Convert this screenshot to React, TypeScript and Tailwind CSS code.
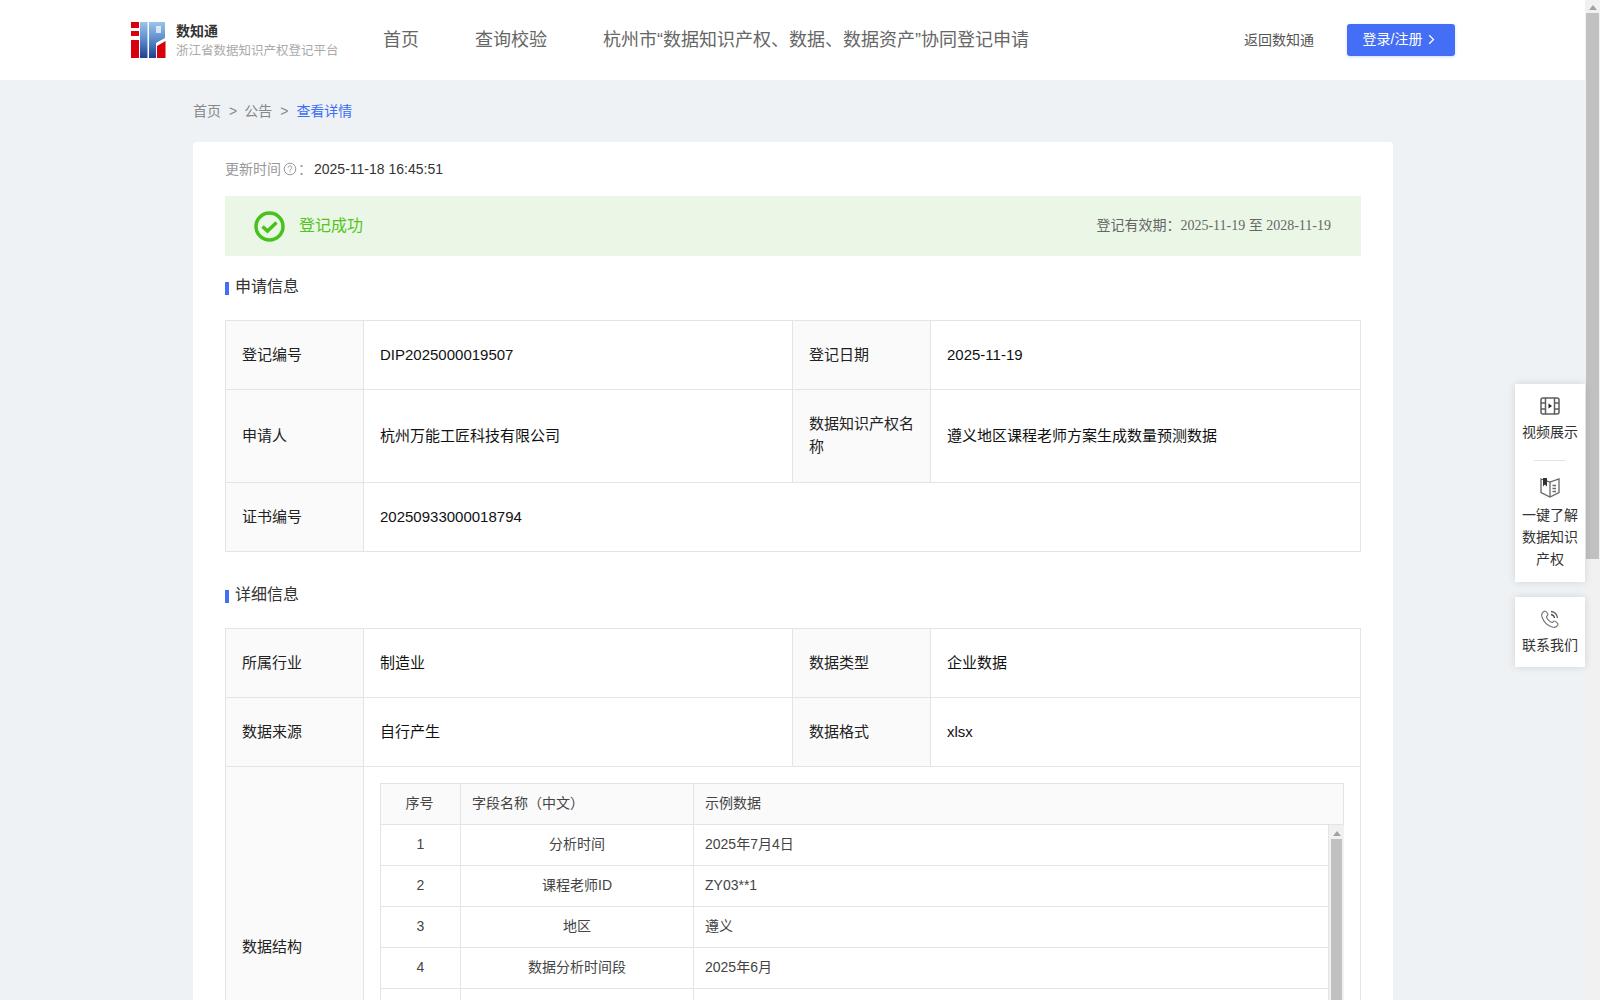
import { ReactNode } from "react";

const sans = "font-['Liberation_Sans','Noto_Sans_CJK_SC',sans-serif]";

function Logo() {
  return (
    <svg width="35" height="36" viewBox="0 0 35 36" className="shrink-0">
      <defs>
        <linearGradient id="blueFade" x1="0" y1="0" x2="0" y2="1">
          <stop offset="0" stopColor="#9cc4ea" />
          <stop offset="0.5" stopColor="#5a8aca" />
          <stop offset="1" stopColor="#1f3f8f" />
        </linearGradient>
      </defs>
      <rect x="0" y="0" width="8" height="6" fill="#d9000d" />
      <rect x="0" y="9" width="8" height="5" fill="#d9000d" />
      <rect x="0" y="18" width="8" height="18" fill="#d9000d" />
      <rect x="9" y="0" width="7.500" height="36" fill="url(#blueFade)" />
      <path d="M18 0H34V16L25 21V36H18Z" fill="url(#blueFade)" />
      <rect x="25" y="4" width="5" height="7" fill="#fff" opacity="0.7" />
      <path d="M26 24L34.500 19V36H26Z" fill="#d9000d" />
    </svg>
  );
}

function VideoIcon() {
  return (
    <svg width="20" height="20" viewBox="0 0 20 20" fill="none" stroke="#5c5c5c" strokeWidth="1.500">
      <rect x="1" y="2" width="18" height="16" rx="2" />
      <path d="M5.500 2V18M14.500 2V18M1 7H5.500M1 13H5.500M14.500 7H19M14.500 13H19" />
      <path d="M8.500 7.500L12 10L8.500 12.500Z" fill="#222" stroke="none" />
    </svg>
  );
}

function BookIcon() {
  return (
    <svg width="20" height="21" viewBox="0 0 20 21" fill="none" stroke="#666" strokeWidth="1.300">
      <path d="M1 2L10 5L19 2V15.500L10 20L1 15.500Z" />
      <path d="M10 5V20M12.500 8.500H16M12.500 11.500H16M12.500 14.500H16" />
      <path d="M3 1H7V9.500L5 7.500L3 9.500Z" fill="#333" stroke="none" />
    </svg>
  );
}

function PhoneIcon() {
  return (
    <svg width="20" height="20" viewBox="0 0 20 20" fill="none" stroke="#777" strokeWidth="1.100">
      <path d="M5 2C2.500 3 1 5 2 8C3.500 12.500 7.500 16.500 12 18C15 19 17 17.500 18 15.500C18.300 14.700 15.500 12 14.500 12C13.500 12 13 13.500 12 13.500C10 13 7 10 6.500 8C6.500 7 8 6.500 8 5.500C8 4.500 5.800 1.800 5 2Z" />
      <path d="M11 5.500C13 5.800 14.200 7 14.500 9M11 2.500C14.500 2.800 17.200 5.500 17.500 9" stroke="#555" strokeWidth="1.300" />
    </svg>
  );
}

function Label({ children, rowSpan }: { children: ReactNode; rowSpan?: number }) {
  return (
    <td rowSpan={rowSpan} className="border border-[#e4e4e4] bg-[#fafafa] px-4 pb-[2px] text-[15px] leading-[23px] text-[#222]">
      {children}
    </td>
  );
}

function Value({ children, colSpan }: { children: ReactNode; colSpan?: number }) {
  return (
    <td colSpan={colSpan} className="border border-[#e4e4e4] px-4 pb-[2px] text-[15px] leading-[23px] text-[#111]">
      {children}
    </td>
  );
}

function SectionTitle({ children }: { children: ReactNode }) {
  return (
    <div className="flex items-center gap-[6px] text-base leading-6 text-[#333]">
      <span className="mt-[3px] h-[13px] w-1 bg-[#446ef5]" />
      {children}
    </div>
  );
}

function Columns() {
  return (
    <colgroup>
      <col className="w-[138px]" />
      <col className="w-[429px]" />
      <col className="w-[138px]" />
      <col />
    </colgroup>
  );
}

const fields = [
  ["1", "分析时间", "2025年7月4日"],
  ["2", "课程老师ID", "ZY03**1"],
  ["3", "地区", "遵义"],
  ["4", "数据分析时间段", "2025年6月"],
  ["", "", ""],
  ["", "", ""],
  ["", "", ""],
];

function FieldTable() {
  return (
    <div className="mb-[-2px] text-sm text-[#444]">
      <div className="flex h-[42px] border border-[#e4e4e4] bg-[#fafafa] leading-[38px]">
        <div className="w-[80px] shrink-0 border-r border-[#e4e4e4] pr-[2px] text-center">序号</div>
        <div className="w-[233px] shrink-0 border-r border-[#e4e4e4] pl-[11px]">字段名称（中文）</div>
        <div className="pl-[11px]">示例数据</div>
      </div>
      <div className="flex">
        <div className="flex-1 border-l border-[#e4e4e4]">
          {fields.map(([no, name, sample], i) => (
            <div key={i} className="flex h-[41px] border-b border-r border-[#e4e4e4] leading-[39px]">
              <div className="w-[80px] shrink-0 border-r border-[#e4e4e4] text-center">{no}</div>
              <div className="w-[233px] shrink-0 border-r border-[#e4e4e4] text-center">{name}</div>
              <div className="pl-[11px]">{sample}</div>
            </div>
          ))}
        </div>
        <div className="flex w-[15px] shrink-0 flex-col items-center bg-[#f1f1f1]">
          <div className="mt-[6px] mb-[3px] border-x-[4px] border-b-[5px] border-x-transparent border-b-[#a3a3a3]" />
          <div className="w-[11px] flex-1 bg-[#c1c1c1]" />
        </div>
      </div>
    </div>
  );
}

export default function App() {
  return (
    <div className={`relative flex h-screen overflow-hidden bg-[#eff2f5] ${sans}`}>
      <div className="min-w-0 flex-1">
        <header className="flex h-20 items-center bg-white pl-[131px] pr-[130px]">
          <Logo />
          <div className="ml-[10px] w-[176px] shrink-0">
            <div className="text-sm font-bold leading-5 text-[#333]">数知通</div>
            <div className="mt-[1px] text-[12.5px] leading-[18px] whitespace-nowrap text-[#aaa]">浙江省数据知识产权登记平台</div>
          </div>
          <nav className="ml-[31px] flex gap-[56px] text-lg whitespace-nowrap text-[#666]">
            <span>首页</span>
            <span>查询校验</span>
            <span>杭州市“数据知识产权、数据、数据资产”协同登记申请</span>
          </nav>
          <span className="ml-auto text-sm whitespace-nowrap text-[#555]">返回数知通</span>
          <button className="ml-[33px] flex h-8 w-[108px] items-center justify-center gap-[6px] rounded-[3px] bg-[#446ef5] pr-1 pb-[2px] text-sm text-white shadow-[0_1px_3px_rgba(68,110,245,0.25)]">
            登录/注册
            <svg width="7" height="11" viewBox="0 0 7 11" fill="none" stroke="#fff" strokeWidth="1.300">
              <path d="M1.200 1.200L5.500 5.500L1.200 9.800" />
            </svg>
          </button>
        </header>

        <main className="ml-[193px] w-[1200px]">
          <div className="flex h-[62px] items-center gap-2 pb-[1px] text-sm text-[#888]">
            <span>首页</span>
            <span>&gt;</span>
            <span className="ml-[-1px]">公告</span>
            <span>&gt;</span>
            <span className="text-[#3b6ef5]">查看详情</span>
          </div>

          <section className="rounded-t-[4px] bg-white px-8">
            <div className="flex h-[54px] items-center text-sm text-[#999]">
              更新时间
              <svg width="14" height="14" viewBox="0 0 14 14" fill="none" stroke="#999" className="ml-[2px]">
                <circle cx="7" cy="7" r="5.800" />
                <path d="M5.200 5.500C5.200 3.400 8.800 3.400 8.800 5.500C8.800 6.800 7 6.800 7 8.500M7 9.500V10.500" />
              </svg>
              <span className="ml-[1px]">：</span>
              <span className="ml-[2px] text-[#333]">2025-11-18 16:45:51</span>
            </div>

            <div className="flex h-[60px] items-center bg-[#ebf7e6] pl-[29px] pr-[30px]">
              <svg width="31" height="31" viewBox="0 0 31 31" fill="none" stroke="#47c21a">
                <circle cx="15.500" cy="15.500" r="13.500" strokeWidth="3.500" />
                <path d="M8.500 15.500L13.500 20L22.500 11.500" strokeWidth="3.500" />
              </svg>
              <span className="ml-[14px] text-base text-[#52c41a]">登记成功</span>
              <span className="ml-auto pb-[1px] text-sm text-[#666]">
                登记有效期：<span className="font-['Liberation_Serif','Noto_Sans_CJK_SC',serif]">2025-11-19 至 2028-11-19</span>
              </span>
            </div>

            <div className="mt-[19px] mb-[21px]">
              <SectionTitle>申请信息</SectionTitle>
            </div>

            <table className="w-[1136px] table-fixed border-collapse">
              <Columns />
              <tbody>
                <tr className="h-[69px]">
                  <Label>登记编号</Label>
                  <Value>DIP2025000019507</Value>
                  <Label>登记日期</Label>
                  <Value>2025-11-19</Value>
                </tr>
                <tr className="h-[93px]">
                  <Label>申请人</Label>
                  <Value>杭州万能工匠科技有限公司</Value>
                  <Label>数据知识产权名称</Label>
                  <Value>遵义地区课程老师方案生成数量预测数据</Value>
                </tr>
                <tr className="h-[69px]">
                  <Label>证书编号</Label>
                  <Value colSpan={3}>20250933000018794</Value>
                </tr>
              </tbody>
            </table>

            <div className="mt-[31px] mb-[21px]">
              <SectionTitle>详细信息</SectionTitle>
            </div>

            <table className="w-[1136px] table-fixed border-collapse">
              <Columns />
              <tbody>
                <tr className="h-[69px]">
                  <Label>所属行业</Label>
                  <Value>制造业</Value>
                  <Label>数据类型</Label>
                  <Value>企业数据</Value>
                </tr>
                <tr className="h-[69px]">
                  <Label>数据来源</Label>
                  <Value>自行产生</Value>
                  <Label>数据格式</Label>
                  <Value>xlsx</Value>
                </tr>
                <tr>
                  <Label>数据结构</Label>
                  <Value colSpan={3}>
                    <div className="py-4">
                      <FieldTable />
                    </div>
                  </Value>
                </tr>
              </tbody>
            </table>
          </section>
        </main>
      </div>

      <aside className="flex w-[15px] shrink-0 flex-col items-center bg-[#f1f1f1]">
        <div className="mt-[5px] mb-[3px] border-x-[4px] border-b-[5px] border-x-transparent border-b-[#a3a3a3]" />
        <div className="h-[546px] w-[13px] bg-[#c1c1c1]" />
      </aside>

      <div className="absolute top-[384px] right-[15px] flex w-[70px] flex-col gap-[15px] text-center text-sm leading-[22px] text-[#333]">
        <div className="bg-white pt-[11px] pb-[12px] shadow-[0_0_8px_rgba(0,0,0,0.12)]">
          <div className="flex h-[22px] items-center justify-center">
            <VideoIcon />
          </div>
          <div className="mt-[4px]">视频展示</div>
          <div className="mx-auto mt-[17px] mb-[15px] h-px w-8 bg-[#e4e4e4]" />
          <div className="flex h-[22px] items-center justify-center">
            <BookIcon />
          </div>
          <div className="mt-[6px] px-[7px] leading-[22px]">一键了解数据知识产权</div>
        </div>
        <div className="bg-white pt-[11px] pb-[11px] shadow-[0_0_8px_rgba(0,0,0,0.12)]">
          <div className="flex h-[22px] items-center justify-center">
            <PhoneIcon />
          </div>
          <div className="mt-[4px]">联系我们</div>
        </div>
      </div>
    </div>
  );
}
